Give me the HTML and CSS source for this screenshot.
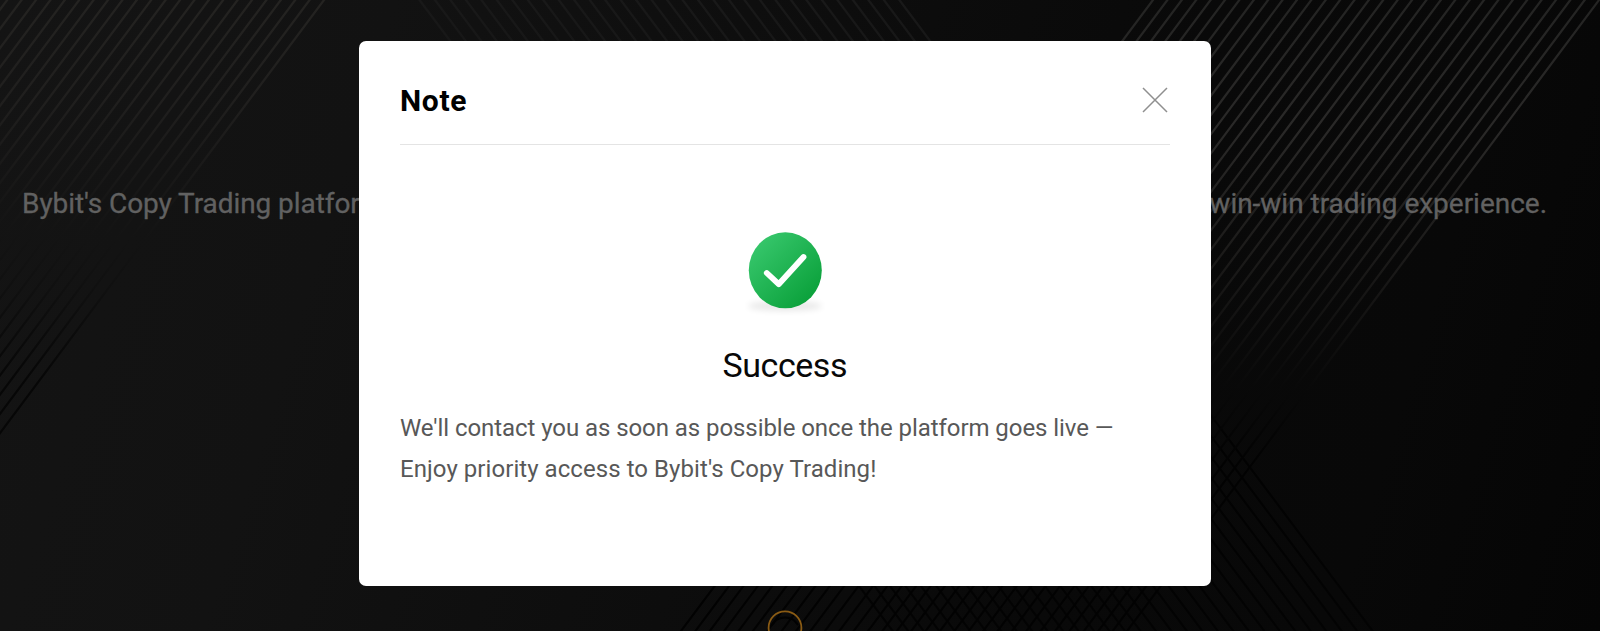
FILE: index.html
```html
<!DOCTYPE html>
<html lang="en">
<head>
<meta charset="utf-8">
<title>Bybit Copy Trading</title>
<link rel="stylesheet" href="styles.css">
</head>
<body>
<main class="hero">
  <svg class="hero-lines" viewBox="0 0 1600 631" fill="none" aria-hidden="true">
    <defs>
      <linearGradient id="fadeLeft" gradientUnits="userSpaceOnUse" x1="0" y1="0" x2="0" y2="631">
        <stop offset="0" stop-color="#242321"/>
        <stop offset=".16" stop-color="#201f1e"/>
        <stop offset=".38" stop-color="#131313"/>
        <stop offset=".46" stop-color="#101010"/>
        <stop offset=".6" stop-color="#070707"/>
        <stop offset="1" stop-color="#050505"/>
      </linearGradient>
      <linearGradient id="fadeMiddle" gradientUnits="userSpaceOnUse" x1="0" y1="0" x2="0" y2="631">
        <stop offset="0" stop-color="#191919"/>
        <stop offset=".5" stop-color="#0c0c0c"/>
        <stop offset=".7" stop-color="#020202"/>
        <stop offset="1" stop-color="#030303"/>
      </linearGradient>
      <linearGradient id="fadeRight" gradientUnits="userSpaceOnUse" x1="0" y1="0" x2="0" y2="631">
        <stop offset="0" stop-color="#242423"/>
        <stop offset=".2" stop-color="#2a2928"/>
        <stop offset=".4" stop-color="#1c1b1a"/>
        <stop offset=".61" stop-color="#090909"/>
        <stop offset=".74" stop-color="#020202"/>
        <stop offset="1" stop-color="#020202"/>
      </linearGradient>
    </defs>
  </svg>
  <p class="tagline"><span class="tagline-start">Bybit's Copy Trading platform</span><span class="tagline-end">win-win trading experience.</span></p>
  <svg class="marker" viewBox="0 0 36 21" fill="none" aria-hidden="true">
    <circle cx="18" cy="17.7" r="16.4" stroke="#8a5b14" stroke-width="1.8"/>
    <path d="M5 15a15 15 0 0 1 26 0" stroke="#020202" stroke-width="2"/>
  </svg>
</main>
<section class="modal" role="dialog" aria-labelledby="title">
  <header class="modal-head">
    <h1 class="modal-title" id="title">Note</h1>
    <svg class="close" viewBox="0 0 26 26" aria-label="Close"><path d="M1 1l24 24M25 1L1 25"/></svg>
  </header>
  <div class="modal-body">
    <svg class="success-icon" viewBox="0 0 90 90" aria-hidden="true">
      <defs>
        <linearGradient id="green" x1=".12" y1=".12" x2=".85" y2=".88">
          <stop offset="0" stop-color="#36c66b"/>
          <stop offset="1" stop-color="#0ba13b"/>
        </linearGradient>
        <filter id="soft" x="-20%" y="-80%" width="140%" height="260%"><feGaussianBlur stdDeviation="3"/></filter>
      </defs>
      <ellipse cx="45" cy="76" rx="37" ry="5" fill="#000" opacity=".09" filter="url(#soft)"/>
      <ellipse cx="45.3" cy="40.3" rx="36.5" ry="38" fill="url(#green)"/>
      <path d="M26.8 43L38.7 54.2L63.5 27" fill="none" stroke="#fff" stroke-width="5.8" stroke-linecap="round" stroke-linejoin="round"/>
    </svg>
    <h2 class="result">Success</h2>
    <p class="message"><span class="line-one">We'll contact you as soon as possible once the platform goes live —</span><br><span class="line-two">Enjoy priority access to Bybit's Copy Trading!</span></p>
  </div>
</section>
<script src="lines.js"></script>
</body>
</html>
```
FILE: styles.css
```css
* { box-sizing: border-box; margin: 0; padding: 0; }
body {
  width: 1600px;
  height: 631px;
  overflow: hidden;
  position: relative;
  font-family: Roboto, "Noto Sans", sans-serif;
}
.hero {
  height: 631px;
  padding: 183px 53px 0 22px;
  position: relative;
  background: linear-gradient(107deg, #141414 0%, #121212 22%, #0e0e0e 42%, #090909 68%, #080808 85%, #050505 100%);
}
.hero-lines { position: absolute; inset: 0; width: 1600px; height: 631px; }
.tagline {
  display: flex;
  justify-content: space-between;
  position: relative;
  font-size: 28px;
  line-height: 42px;
  color: #616161;
  -webkit-text-stroke: .3px #616161;
  white-space: nowrap;
}
.tagline-start { letter-spacing: -.07px; }
.tagline-end { letter-spacing: -.02px; }
.marker { position: absolute; left: 767px; bottom: 0; width: 36px; height: 21px; }
.modal {
  position: absolute;
  left: 359px;
  top: 41.4px;
  width: 851.5px;
  height: 544.6px;
  padding: 0 41px;
  border-radius: 7px;
  background: #fff;
}
.modal-head {
  display: flex;
  justify-content: space-between;
  align-items: center;
  height: 103.6px;
  padding: 15px 2px 0 0;
  border-bottom: 1px solid #e4e4e4;
}
.modal-title { padding-top: 2px; font-size: 30px; font-weight: 700; line-height: 40px; letter-spacing: .7px; color: #000; }
.close { width: 26px; height: 26px; fill: none; stroke: #8f8f8f; stroke-width: 1.5; }
.modal-body { display: flex; flex-direction: column; align-items: center; padding-top: 85px; }
.success-icon { width: 90px; height: 90px; }
.result { margin-top: 21px; font-size: 34px; font-weight: 400; line-height: 48px; letter-spacing: -.45px; color: #080808; }
.message { align-self: stretch; margin-top: 19px; font-size: 24px; line-height: 41px; color: #585858; white-space: nowrap; }
.line-one { letter-spacing: -.065px; }
.line-two { letter-spacing: .06px; }
```
FILE: lines.js
```js
// Draws the slanted line groups behind the hero text.
const svg = document.querySelector('.hero-lines');
const groups = [
  { start: -122.4, step: 14.4, count: 32, slope: -0.748, paint: 'fadeLeft' },
  { start: 419.5, step: 15.48, count: 32, slope: 0.75, paint: 'fadeMiddle' },
  { start: 1153, step: 14.39, count: 32, slope: -0.748, paint: 'fadeRight' }
];
for (const { start, step, count, slope, paint } of groups) {
  let d = '';
  for (let i = 0; i < count; i++) {
    const x = start + i * step;
    d += `M${x - slope * 5} -5L${x + slope * 640} 640`;
  }
  const path = document.createElementNS('http://www.w3.org/2000/svg', 'path');
  path.setAttribute('d', d);
  path.setAttribute('stroke', `url(#${paint})`);
  path.setAttribute('stroke-width', '2.2');
  svg.appendChild(path);
}
```
